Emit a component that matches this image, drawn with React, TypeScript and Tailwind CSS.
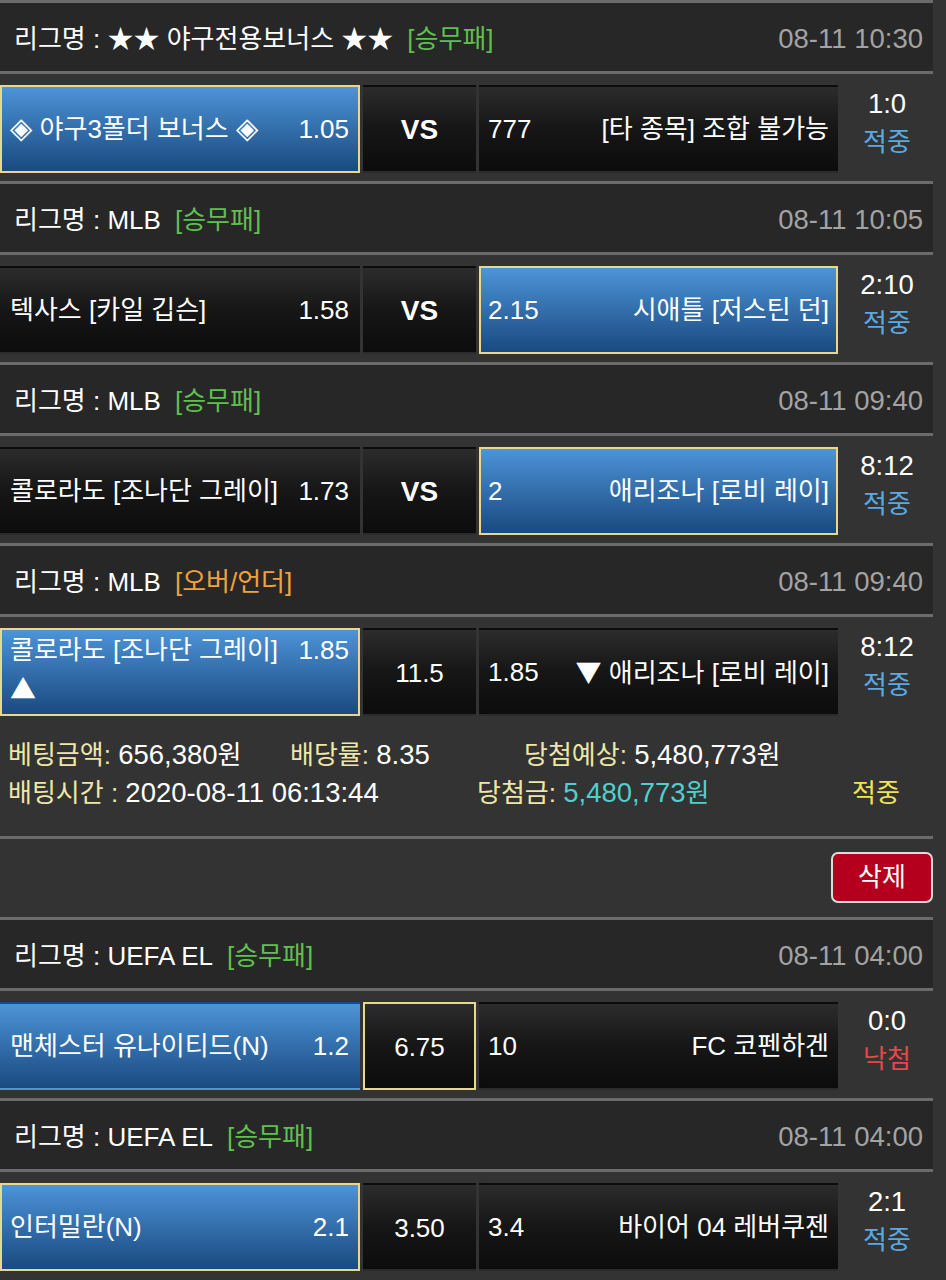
import type { ReactNode } from 'react';

type BoxKind = 'blueBorder' | 'blue' | 'dark' | 'darkBorder';

interface Match {
  league: string;
  tag: string;
  tagColor: string;
  time: string;
  home: { kind: BoxKind; content: ReactNode };
  mid: { kind: BoxKind; text: string; bold?: boolean };
  away: { kind: BoxKind; content: ReactNode };
  score: string;
  result: string;
  resultColor: string;
}

const boxClass: Record<BoxKind, string> = {
  blueBorder: 'border-2 border-[#e6d88e] bg-linear-to-b from-[#4d94d8] to-[#1a4a80]',
  blue: 'border-2 border-transparent bg-linear-to-b from-[#4d94d8] to-[#1a4a80]',
  dark: 'border-2 border-transparent bg-linear-to-b from-[#2c2c2c] via-[#161616] to-[#0c0c0c]',
  darkBorder: 'border-2 border-[#e6d88e] bg-linear-to-b from-[#2c2c2c] via-[#161616] to-[#0c0c0c]',
};

function HomeLine({ name, odds }: { name: ReactNode; odds: string }) {
  return (
    <div className="flex h-full items-center justify-between pl-[8px] pr-[9px]">
      <span>{name}</span>
      <span>{odds}</span>
    </div>
  );
}

function AwayLine({ odds, name }: { odds: string; name: ReactNode }) {
  return (
    <div className="flex h-full items-center justify-between pl-[7px] pr-[7px]">
      <span>{odds}</span>
      <span>{name}</span>
    </div>
  );
}

const GREEN = 'text-[#5fbf4f]';
const BLUE = 'text-[#5aa9e2]';

const Diamond = () => <span className="font-['DejaVu_Sans'] text-[29px]">◈</span>;
const Arrow = ({ c }: { c: string }) => <span className="font-['Noto_Sans_CJK_KR']">{c}</span>;
const Num = ({ children }: { children: ReactNode }) => <span className="text-[27.5px]">{children}</span>;

const matchesTop: Match[] = [
  {
    league: '★★ 야구전용보너스 ★★',
    tag: '[승무패]',
    tagColor: GREEN,
    time: '08-11 10:30',
    home: {
      kind: 'blueBorder',
      content: (
        <HomeLine
          name={
            <>
              <Diamond /> 야구3폴더 보너스 <Diamond />
            </>
          }
          odds="1.05"
        />
      ),
    },
    mid: { kind: 'dark', text: 'VS', bold: true },
    away: { kind: 'dark', content: <AwayLine odds="777" name="[타 종목] 조합 불가능" /> },
    score: '1:0',
    result: '적중',
    resultColor: BLUE,
  },
  {
    league: 'MLB',
    tag: '[승무패]',
    tagColor: GREEN,
    time: '08-11 10:05',
    home: { kind: 'dark', content: <HomeLine name="텍사스 [카일 깁슨]" odds="1.58" /> },
    mid: { kind: 'dark', text: 'VS', bold: true },
    away: { kind: 'blueBorder', content: <AwayLine odds="2.15" name="시애틀 [저스틴 던]" /> },
    score: '2:10',
    result: '적중',
    resultColor: BLUE,
  },
  {
    league: 'MLB',
    tag: '[승무패]',
    tagColor: GREEN,
    time: '08-11 09:40',
    home: { kind: 'dark', content: <HomeLine name="콜로라도 [조나단 그레이]" odds="1.73" /> },
    mid: { kind: 'dark', text: 'VS', bold: true },
    away: { kind: 'blueBorder', content: <AwayLine odds="2" name="애리조나 [로비 레이]" /> },
    score: '8:12',
    result: '적중',
    resultColor: BLUE,
  },
  {
    league: 'MLB',
    tag: '[오버/언더]',
    tagColor: 'text-[#f0a23c]',
    time: '08-11 09:40',
    home: {
      kind: 'blueBorder',
      content: (
        <div className="pl-[8px] pr-[9px] pt-[1px] leading-[38px]">
          <div className="flex justify-between">
            <span>콜로라도 [조나단 그레이]</span>
            <span>1.85</span>
          </div>
          <div>
            <Arrow c="▲" />
          </div>
        </div>
      ),
    },
    mid: { kind: 'dark', text: '11.5' },
    away: {
      kind: 'dark',
      content: (
        <AwayLine
          odds="1.85"
          name={
            <>
              <Arrow c="▼" /> 애리조나 [로비 레이]
            </>
          }
        />
      ),
    },
    score: '8:12',
    result: '적중',
    resultColor: BLUE,
  },
];

const matchesBottom: Match[] = [
  {
    league: 'UEFA EL',
    tag: '[승무패]',
    tagColor: GREEN,
    time: '08-11 04:00',
    home: { kind: 'blue', content: <HomeLine name="맨체스터 유나이티드(N)" odds="1.2" /> },
    mid: { kind: 'darkBorder', text: '6.75' },
    away: { kind: 'dark', content: <AwayLine odds="10" name="FC 코펜하겐" /> },
    score: '0:0',
    result: '낙첨',
    resultColor: 'text-[#e5474b]',
  },
  {
    league: 'UEFA EL',
    tag: '[승무패]',
    tagColor: GREEN,
    time: '08-11 04:00',
    home: { kind: 'blueBorder', content: <HomeLine name="인터밀란(N)" odds="2.1" /> },
    mid: { kind: 'dark', text: '3.50' },
    away: { kind: 'dark', content: <AwayLine odds="3.4" name="바이어 04 레버쿠젠" /> },
    score: '2:1',
    result: '적중',
    resultColor: BLUE,
  },
];

function MatchBlock({ m }: { m: Match }) {
  return (
    <div>
      {/* 리그 헤더 */}
      <div className="flex h-[74px] items-center justify-between border-y-[3px] border-[#6b6b6b] bg-[#272727] pl-[14px] pr-[10px] pt-[4px]">
        <div className="flex items-center gap-[14px]">
          <span className="text-white">리그명 : {m.league}</span>
          <span className={m.tagColor}>{m.tag}</span>
        </div>
        <span className="text-[27.5px] text-[#a3a3a3]">{m.time}</span>
      </div>
      {/* 경기 행 */}
      <div className="grid grid-cols-[360px_113px_359px_1fr] gap-x-[3px] pt-[11px] pb-[8px] text-white">
        <div className={`h-[88px] ${boxClass[m.home.kind]}`}>{m.home.content}</div>
        <div
          className={`flex h-[88px] items-center justify-center pt-[2px] ${boxClass[m.mid.kind]} ${
            m.mid.bold ? 'text-[28px] font-bold' : ''
          }`}
        >
          {m.mid.text}
        </div>
        <div className={`h-[88px] ${boxClass[m.away.kind]}`}>{m.away.content}</div>
        <div className="flex flex-col items-center leading-[38px]">
          <span className="text-[27.5px] text-white">{m.score}</span>
          <span className={m.resultColor}>{m.result}</span>
        </div>
      </div>
    </div>
  );
}

export default function App() {
  return (
    <div className="min-h-[1280px] bg-[#333333] font-['Liberation_Sans','Noto_Sans_CJK_KR',sans-serif] text-[26px]">
      <div className="w-[933px]">
        {matchesTop.map((m, i) => (
          <MatchBlock key={i} m={m} />
        ))}

        {/* 베팅 정보 */}
        <div className="pl-[8px] pt-[12px] pb-[24px] leading-[38px]">
          <div className="flex">
            <div className="w-[282px]">
              <span className="text-[#efe7a7]">베팅금액: </span>
              <span className="text-white">
                <Num>656,380</Num>원
              </span>
            </div>
            <div className="w-[234px]">
              <span className="text-[#efe7a7]">배당률: </span>
              <span className="text-white">
                <Num>8.35</Num>
              </span>
            </div>
            <div>
              <span className="text-[#efe7a7]">당첨예상: </span>
              <span className="text-white">
                <Num>5,480,773</Num>원
              </span>
            </div>
          </div>
          <div className="flex">
            <div className="w-[469px]">
              <span className="text-[#efe7a7]">배팅시간 : </span>
              <span className="text-white">
                <Num>2020-08-11 06:13:44</Num>
              </span>
            </div>
            <div className="w-[375px]">
              <span className="text-[#efe7a7]">당첨금: </span>
              <span className="text-[#4fd0cc]">
                <Num>5,480,773</Num>원
              </span>
            </div>
            <div className="text-[#f1e356]">적중</div>
          </div>
        </div>

        {/* 삭제 버튼 */}
        <div className="flex justify-end border-t-[3px] border-[#6b6b6b] pt-[13px] pb-[14px]">
          <button className="h-[51px] w-[102px] rounded-[7px] border-2 border-[#dcdcdc] bg-[#b5001d] text-[26px] text-white">
            삭제
          </button>
        </div>

        {matchesBottom.map((m, i) => (
          <MatchBlock key={i} m={m} />
        ))}
      </div>
    </div>
  );
}
